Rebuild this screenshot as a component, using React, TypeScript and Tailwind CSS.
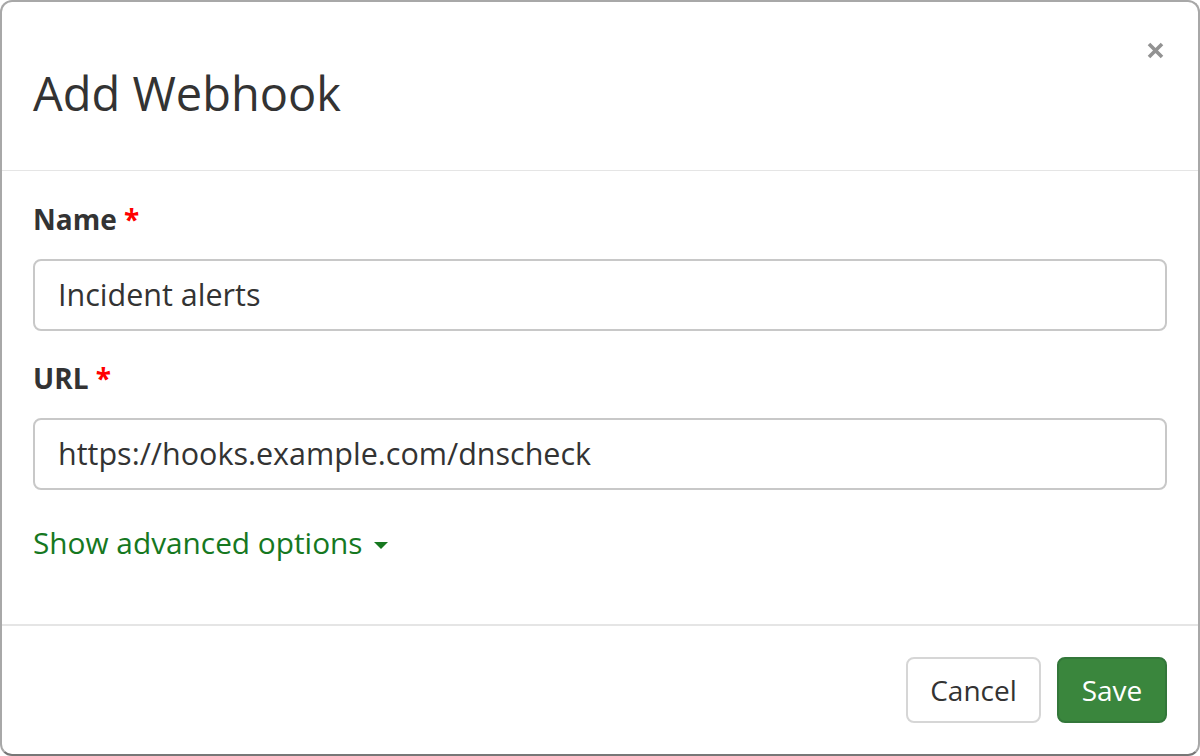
import React from 'react';

const font = { fontFamily: '"Open Sans", "Noto Sans", sans-serif' };

function Field({ label, value }: { label: string; value: string }) {
  return (
    <div className="flex flex-col">
      <label className="text-[28px] font-bold leading-[40px] text-[#333]">
        {label} <span className="text-[#ff0000]">*</span>
      </label>
      <div className="mt-[20px] flex h-[72px] items-center rounded-[8px] border-2 border-[#c8c8c8] px-[23px] text-[30.5px] text-[#333]">
        {value}
      </div>
    </div>
  );
}

export default function App() {
  return (
    <div style={font} className="h-[756px] w-[1200px] bg-white">
      <div className="flex h-full w-full flex-col overflow-hidden rounded-[12px] border-2 border-[#a8a8a8] border-b-[#777]">
        <div className="flex h-[169px] shrink-0 items-start justify-between border-b border-[#e5e5e5] pl-[31px] pr-[34px]">
          <h1 className="mt-[61px] text-[47px] leading-[60px] text-[#333]">Add Webhook</h1>
          <button aria-label="Close" className="mt-[40px] text-[#929292]">
            <svg width="17" height="17" viewBox="0 0 17 17">
              <path d="M2 2L15 15M15 2L2 15" stroke="currentColor" strokeWidth="3.6" />
            </svg>
          </button>
        </div>

        <div className="flex flex-1 flex-col gap-[27px] px-[31px] pt-[28px]">
          <Field label="Name" value="Incident alerts" />
          <Field label="URL" value="https://hooks.example.com/dnscheck" />
          <button className="mt-[6px] flex items-center gap-[11px] self-start text-[29.8px] leading-[40px] text-[#16781f]">
            Show advanced options
            <svg width="14" height="7" viewBox="0 0 14 7" className="mt-[4px]">
              <path d="M0 0h14L7 7z" fill="currentColor" />
            </svg>
          </button>
        </div>

        <div className="flex h-[130px] shrink-0 items-center justify-end gap-[16px] border-t-2 border-[#e5e5e5] pr-[31px]">
          <button className="h-[66px] w-[135px] rounded-[8px] border-2 border-[#d6d6d6] bg-white text-[28px] text-[#333]">
            Cancel
          </button>
          <button className="h-[66px] w-[110px] rounded-[8px] border-2 border-[#33773a] bg-[#3a863d] text-[28px] text-white">
            Save
          </button>
        </div>
      </div>
    </div>
  );
}
